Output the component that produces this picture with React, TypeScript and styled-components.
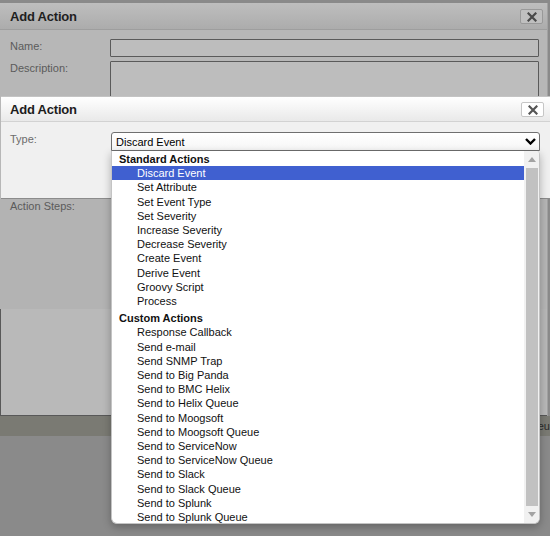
import styled, { createGlobalStyle } from 'styled-components'

const GlobalStyle = createGlobalStyle`
  html, body {
    margin: 0;
    padding: 0;
    overflow: hidden;
    background: #8a8a8a;
  }
`

const standardActions = [
  'Discard Event',
  'Set Attribute',
  'Set Event Type',
  'Set Severity',
  'Increase Severity',
  'Decrease Severity',
  'Create Event',
  'Derive Event',
  'Groovy Script',
  'Process',
]

const customActions = [
  'Response Callback',
  'Send e-mail',
  'Send SNMP Trap',
  'Send to Big Panda',
  'Send to BMC Helix',
  'Send to Helix Queue',
  'Send to Moogsoft',
  'Send to Moogsoft Queue',
  'Send to ServiceNow',
  'Send to ServiceNow Queue',
  'Send to Slack',
  'Send to Slack Queue',
  'Send to Splunk',
  'Send to Splunk Queue',
]

const Page = styled.div`
  position: relative;
  width: 550px;
  height: 536px;
  padding-top: 3px;
  box-sizing: border-box;
  background: #8a8a8a;
  overflow: hidden;
  font-family: "Liberation Sans", Arial, sans-serif;
`

const BackDialog = styled.div`
  width: 548px;
  background: #b7b7b7;
  border-right: 1px solid #a2a2a2;
  box-sizing: border-box;
`

const DialogHeader = styled.div<{ $front?: boolean }>`
  display: flex;
  align-items: center;
  justify-content: space-between;
  box-sizing: border-box;
  height: ${p => (p.$front ? '25px' : '27px')};
  padding: ${p => (p.$front ? '0 8px 0 9px' : '0 4px 0 10px')};
  background: ${p =>
    p.$front
      ? 'linear-gradient(#ffffff, #e9e9e9)'
      : 'linear-gradient(#bebebe, #acacac)'};
  border-bottom: 1px solid ${p => (p.$front ? '#d2d2d2' : '#9e9e9e')};
`

const DialogTitle = styled.span<{ $front?: boolean }>`
  font-size: 13px;
  font-weight: bold;
  letter-spacing: -0.2px;
  color: ${p => (p.$front ? '#1c1c1c' : '#1f1f1f')};
`

const CloseButton = styled.button<{ $front?: boolean }>`
  display: flex;
  align-items: center;
  justify-content: center;
  width: 23px;
  height: 15px;
  padding: 0;
  margin-top: 1px;
  border: 1px solid ${p => (p.$front ? '#c6c6c6' : '#999999')};
  border-radius: 2px;
  background: ${p => (p.$front ? '#ffffff' : '#bfbfbf')};
  color: ${p => (p.$front ? '#555555' : '#4a4a4a')};
`

const BackBody = styled.div`
  display: grid;
  grid-template-columns: 100px 1fr;
  row-gap: 4px;
  padding: 9px 8px 0 10px;
`

const FieldLabel = styled.div<{ $front?: boolean }>`
  padding-top: 1px;
  font-size: 11px;
  line-height: 13px;
  color: ${p => (p.$front ? '#6c6c6c' : '#5b5b5b')};
`

const DimInput = styled.div<{ $h: number }>`
  height: ${p => p.$h}px;
  box-sizing: border-box;
  border: 1px solid #5a5a5a;
  border-radius: 1px;
  background: #bdbdbd;
`

const StepsArea = styled.div`
  height: 110px;
  grid-column: 1 / span 2;
  display: grid;
  grid-template-columns: 100px 1fr;
  margin-left: -10px;
  padding-left: 10px;
  background: #b3b3b3;
`

const StepsPanel = styled.div`
  height: 107px;
  box-sizing: border-box;
  border-left: 1px solid #585858;
  border-bottom: 1px solid #585858;
  background: #b9b9b9;
`

const FooterStrip = styled.div`
  display: flex;
  justify-content: flex-end;
  align-items: center;
  height: 20px;
  background: #7a7a73;
  overflow: hidden;
  font-size: 11px;
  color: #2a2a2a;
`

const FooterText = styled.span`
  margin-right: -6px;
`

const FrontDialog = styled.div`
  position: absolute;
  top: 96px;
  left: 1px;
  width: 551px;
  height: 103px;
  box-sizing: border-box;
  border-top: 1px solid #c4c4c4;
  border-bottom: 1px solid #8c8c8c;
  background: #f0f0f0;
`

const FrontBody = styled.div`
  display: grid;
  grid-template-columns: 101px 429px;
  padding: 10px 0 0 9px;
`

const SelectWrap = styled.div`
  position: relative;
`

const SelectBox = styled.div`
  display: flex;
  align-items: center;
  justify-content: space-between;
  height: 19px;
  box-sizing: border-box;
  padding: 0 3px 0 4px;
  border: 1px solid #6f6f6f;
  border-radius: 3px 3px 0 0;
  background: linear-gradient(#ffffff, #f6f6f6);
  font-size: 11px;
  color: #000000;
`

const ListBox = styled.div`
  position: absolute;
  top: 100%;
  left: 0;
  right: 0;
  height: 373px;
  display: flex;
  box-sizing: border-box;
  border: 1px solid #c4c4c4;
  border-top: none;
  border-radius: 0 4px 6px 6px;
  background: #ffffff;
  box-shadow: 0 3px 9px rgba(0, 0, 0, 0.28);
  overflow: hidden;
  font-size: 11px;
`

const Options = styled.div`
  flex: 1;
  padding-top: 1px;
`

const GroupLabel = styled.div<{ $gap?: boolean }>`
  margin-top: ${p => (p.$gap ? '3px' : '0')};
  padding-left: 7px;
  line-height: 14.2px;
  font-weight: bold;
  color: #111111;
`

const Option = styled.div<{ $selected?: boolean }>`
  padding-left: 25px;
  line-height: 14.2px;
  white-space: nowrap;
  color: ${p => (p.$selected ? '#ffffff' : '#111111')};
  background: ${p => (p.$selected ? '#4060d0' : 'transparent')};
`

const ScrollTrack = styled.div`
  display: flex;
  flex-direction: column;
  width: 15px;
  background: #f1f1f1;
`

const ScrollArrow = styled.div`
  display: flex;
  align-items: center;
  justify-content: center;
  height: 17px;
`

const ScrollThumb = styled.div`
  flex: 1;
  margin: 0 1px 0 2px;
  background: #c1c1c1;
`

const CloseIcon = () => (
  <svg width="10" height="10" viewBox="0 0 10 10">
    <path d="M1.5 1.5 L8.5 8.5 M8.5 1.5 L1.5 8.5" stroke="currentColor" strokeWidth="2.2" strokeLinecap="square" />
  </svg>
)

const Chevron = () => (
  <svg width="11" height="7" viewBox="0 0 11 7">
    <path d="M1 1 L5.5 5.5 L10 1" stroke="#000" strokeWidth="2.4" fill="none" />
  </svg>
)

const Triangle = ({ up }: { up?: boolean }) => (
  <svg width="8" height="5" viewBox="0 0 8 5">
    <path d={up ? 'M0 5 L4 0 L8 5 Z' : 'M0 0 L8 0 L4 5 Z'} fill="#a3a3a3" />
  </svg>
)

const App = () => {
  return (
    <Page>
      <GlobalStyle />
      <BackDialog>
        <DialogHeader>
          <DialogTitle>Add Action</DialogTitle>
          <CloseButton>
            <CloseIcon />
          </CloseButton>
        </DialogHeader>
        <BackBody>
          <FieldLabel>Name:</FieldLabel>
          <DimInput $h={18} />
          <FieldLabel>Description:</FieldLabel>
          <DimInput $h={134} />
          <StepsArea>
            <FieldLabel>Action Steps:</FieldLabel>
            <div />
          </StepsArea>
        </BackBody>
        <StepsPanel />
      </BackDialog>
      <FooterStrip>
        <FooterText>Queue</FooterText>
      </FooterStrip>

      <FrontDialog>
        <DialogHeader $front>
          <DialogTitle $front>Add Action</DialogTitle>
          <CloseButton $front>
            <CloseIcon />
          </CloseButton>
        </DialogHeader>
        <FrontBody>
          <FieldLabel $front>Type:</FieldLabel>
          <SelectWrap>
            <SelectBox>
              <span>Discard Event</span>
              <Chevron />
            </SelectBox>
            <ListBox>
              <Options>
                <GroupLabel>Standard Actions</GroupLabel>
                {standardActions.map((name, i) => (
                  <Option key={name} $selected={i === 0}>{name}</Option>
                ))}
                <GroupLabel $gap>Custom Actions</GroupLabel>
                {customActions.map(name => (
                  <Option key={name}>{name}</Option>
                ))}
              </Options>
              <ScrollTrack>
                <ScrollArrow>
                  <Triangle up />
                </ScrollArrow>
                <ScrollThumb />
                <ScrollArrow>
                  <Triangle />
                </ScrollArrow>
              </ScrollTrack>
            </ListBox>
          </SelectWrap>
        </FrontBody>
      </FrontDialog>
    </Page>
  )
}

export default App
